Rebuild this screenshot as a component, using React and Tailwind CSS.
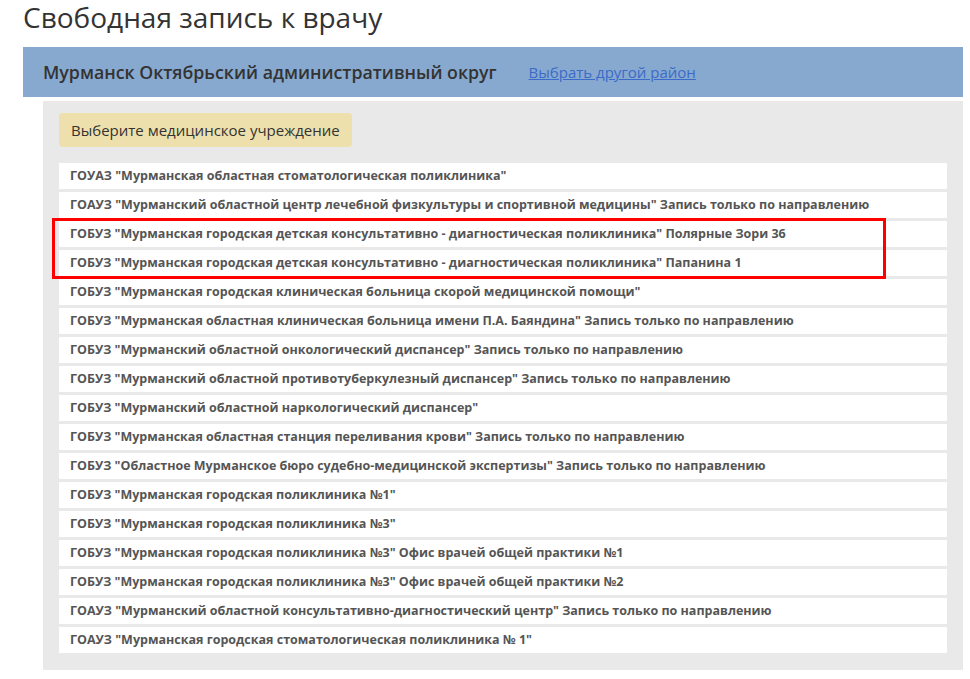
import React from "react";

const clinics = [
  'ГОУАЗ "Мурманская областная стоматологическая поликлиника"',
  'ГОАУЗ "Мурманский областной центр лечебной физкультуры и спортивной медицины" Запись только по направлению',
  'ГОБУЗ "Мурманская городская детская консультативно - диагностическая поликлиника" Полярные Зори 36',
  'ГОБУЗ "Мурманская городская детская консультативно - диагностическая поликлиника" Папанина 1',
  'ГОБУЗ "Мурманская городская клиническая больница скорой медицинской помощи"',
  'ГОБУЗ "Мурманская областная клиническая больница имени П.А. Баяндина" Запись только по направлению',
  'ГОБУЗ "Мурманский областной онкологический диспансер" Запись только по направлению',
  'ГОБУЗ "Мурманский областной противотуберкулезный диспансер" Запись только по направлению',
  'ГОБУЗ "Мурманский областной наркологический диспансер"',
  'ГОБУЗ "Мурманская областная станция переливания крови" Запись только по направлению',
  'ГОБУЗ "Областное Мурманское бюро судебно-медицинской экспертизы" Запись только по направлению',
  'ГОБУЗ "Мурманская городская поликлиника №1"',
  'ГОБУЗ "Мурманская городская поликлиника №3"',
  'ГОБУЗ "Мурманская городская поликлиника №3" Офис врачей общей практики №1',
  'ГОБУЗ "Мурманская городская поликлиника №3" Офис врачей общей практики №2',
  'ГОАУЗ "Мурманский областной консультативно-диагностический центр" Запись только по направлению',
  'ГОАУЗ "Мурманская городская стоматологическая поликлиника № 1"',
];

const App = () => {
  return (
    <div className="w-[970px] h-[679px] bg-white overflow-hidden font-['Open_Sans',sans-serif] text-[#333]">
      <div className="pl-[23px] pr-[7px]">
        <h1 className="text-[28px] leading-[34px] mb-[13px] text-[#333]">
          Свободная запись к врачу
        </h1>
        <div className="bg-[#87a9cf] h-[50px] flex items-center px-5 gap-[32px]">
          <span className="text-[17.75px] font-semibold text-[#333]">
            Мурманск Октябрьский административный округ
          </span>
          <a href="#" className="text-[15px] text-[#3b6bc8] underline">
            Выбрать другой район
          </a>
        </div>
        <div className="ml-5 mt-1 bg-[#e9e9e9] pt-3 pb-[17px] px-4">
          <div className="inline-flex items-center h-[34px] px-3 rounded bg-[#eee0ac] text-[15px] text-[#333]">
            Выберите медицинское учреждение
          </div>
          <div className="relative mt-[16px] flex flex-col gap-[3px]">
            {clinics.map((name, index) => (
              <div
                key={index}
                className="bg-white h-[26px] flex items-center pl-[11px] text-[12.5px] font-bold text-[#555] whitespace-nowrap"
              >
                {name}
              </div>
            ))}
            <div className="absolute left-[-7px] top-[55px] w-[834px] h-[61px] border-[3px] border-[#ff0000] pointer-events-none" />
          </div>
        </div>
      </div>
    </div>
  );
};

export default App;
